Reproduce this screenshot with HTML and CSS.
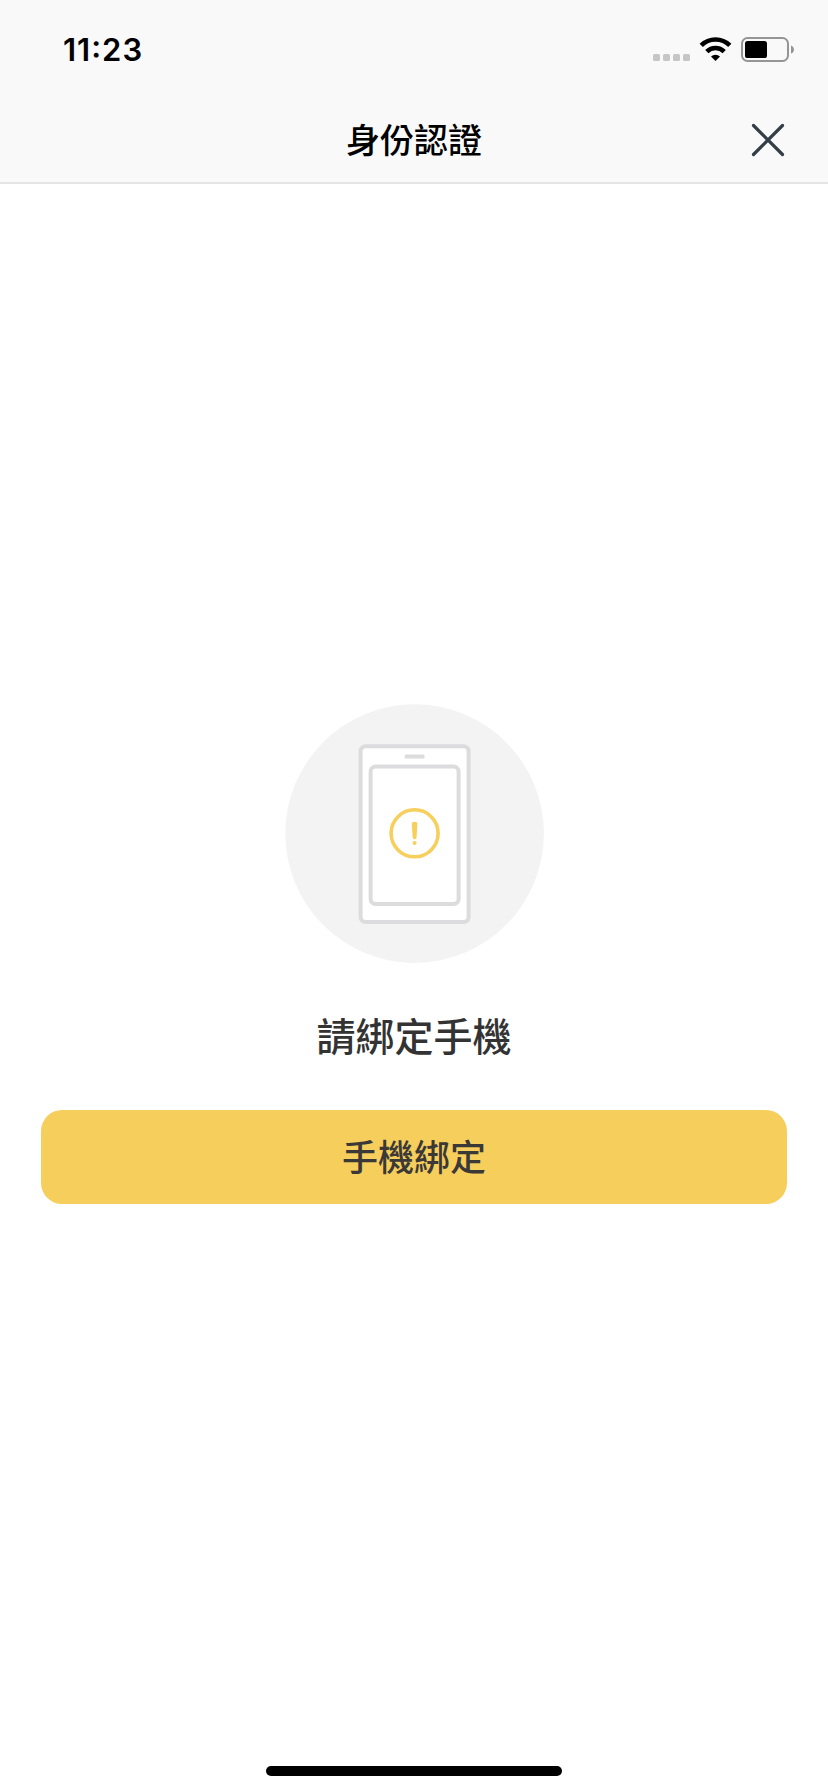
FILE: index.html
```html
<!DOCTYPE html>
<html lang="zh-Hant">
<head>
<meta charset="utf-8">
<meta name="viewport" content="width=device-width, initial-scale=1">
<title>身份認證</title>
<link rel="stylesheet" href="styles.css">
</head>
<body>
<div class="screen">
  <header class="header">
    <div class="status">
      <span class="time">11:23</span>
      <svg class="indicators" width="142" height="26" viewBox="653 36 142 26" aria-hidden="true">
        <g fill="#c6c6c6">
          <rect x="653" y="54" width="7" height="7" rx="1.5"/>
          <rect x="663" y="54" width="7" height="7" rx="1.5"/>
          <rect x="673" y="54" width="7" height="7" rx="1.5"/>
          <rect x="683" y="54" width="7" height="7" rx="1.5"/>
        </g>
        <g fill="none" stroke="#000" stroke-width="4.6">
          <path d="M701.2 45.3a20.4 20.4 0 0 1 28.6 0"/>
          <path d="M706.8 51.6a12.3 12.3 0 0 1 17.4 0"/>
        </g>
        <path d="M715.5 61l-4.5-4.5a6.4 6.4 0 0 1 9 0z"/>
        <rect x="742" y="38" width="46" height="23" rx="5.5" fill="none" stroke="#959595" stroke-width="2"/>
        <rect x="745" y="41" width="22" height="17" rx="2.6"/>
        <path d="M791 45.4c4 1.6 4 6.6 0 8.2z" fill="#959595"/>
      </svg>
    </div>
    <div class="nav">
      <h1 class="title">身份認證</h1>
      <button class="close" aria-label="關閉">
        <svg width="34" height="34" viewBox="0 0 34 34"><path d="M2.5 2.5l29 29M31.5 2.5l-29 29" fill="none" stroke="#333e48" stroke-width="3.2" stroke-linecap="round"/></svg>
      </button>
    </div>
  </header>
  <main class="content">
    <svg class="art" width="262" height="260" viewBox="-1.6 0.4 262 260" aria-hidden="true">
      <circle cx="130" cy="130" r="129.3" fill="#f3f3f3"/>
      <g fill="#fff" stroke="#dcdcde" stroke-width="4">
        <rect x="76" y="42.7" width="108" height="175.8" rx="5"/>
        <rect x="86" y="63" width="88" height="137.5" rx="5"/>
      </g>
      <rect x="120" y="50.8" width="20" height="4" rx="1.5" fill="#dcdcde"/>
      <circle cx="130" cy="129.7" r="23.5" fill="none" stroke="#f6cf5d" stroke-width="3.6"/>
      <path d="M127.2 120a2.8 1.8 0 0 1 5.6 0l-.8 13.6a2 2 0 0 1-4 0z" fill="#f6cf5d"/>
      <circle cx="130" cy="139.4" r="2" fill="#f6cf5d"/>
    </svg>
    <p class="message">請綁定手機</p>
    <button class="primary">手機綁定</button>
  </main>
  <div class="home"></div>
</div>
</body>
</html>
```
FILE: styles.css
```css
* {
  box-sizing: border-box;
}

body {
  margin: 0;
  background: #fff;
  font-family: "Noto Sans CJK TC", sans-serif;
}

button {
  border: 0;
  padding: 0;
  background: none;
  font-family: inherit;
}

.screen {
  display: flex;
  flex-direction: column;
  align-items: center;
  width: 828px;
  height: 1792px;
}

.header {
  width: 100%;
  height: 184px;
  background: #f9f9f9;
  border-bottom: 2px solid #e5e5e5;
}

.status {
  display: flex;
  align-items: center;
  justify-content: space-between;
  height: 98px;
  padding: 0 33px 0 63px;
}

.time {
  padding-top: 2px;
  font: 600 31px/40px Inter, sans-serif;
  font-feature-settings: "calt", "case";
  letter-spacing: 1px;
  color: #000;
}

.nav {
  display: grid;
  grid-template-columns: 1fr auto 1fr;
  align-items: center;
  height: 84px;
  padding-right: 43px;
  padding-left: 43px;
}

.title {
  grid-column: 2;
  margin: 0;
  padding-bottom: 2px;
  font-size: 34px;
  font-weight: 500;
  line-height: 50px;
  color: #000;
}

.close {
  display: flex;
  justify-self: end;
}

.content {
  display: flex;
  flex: 1;
  flex-direction: column;
  align-items: center;
  width: 100%;
  padding: 520px 41px 0;
}

.art {
  display: block;
}

.message {
  margin: 40px 0 46px;
  font-size: 39px;
  font-weight: 500;
  line-height: 60px;
  color: #333;
}

.primary {
  width: 746px;
  height: 94px;
  padding-bottom: 4px;
  border-radius: 21px;
  background: #f6ce5b;
  color: #3b3838;
  font-size: 36px;
  font-weight: 500;
  line-height: 90px;
}

.home {
  width: 296px;
  height: 10px;
  margin-bottom: 16px;
  border-radius: 5px;
  background: #000;
}
```
